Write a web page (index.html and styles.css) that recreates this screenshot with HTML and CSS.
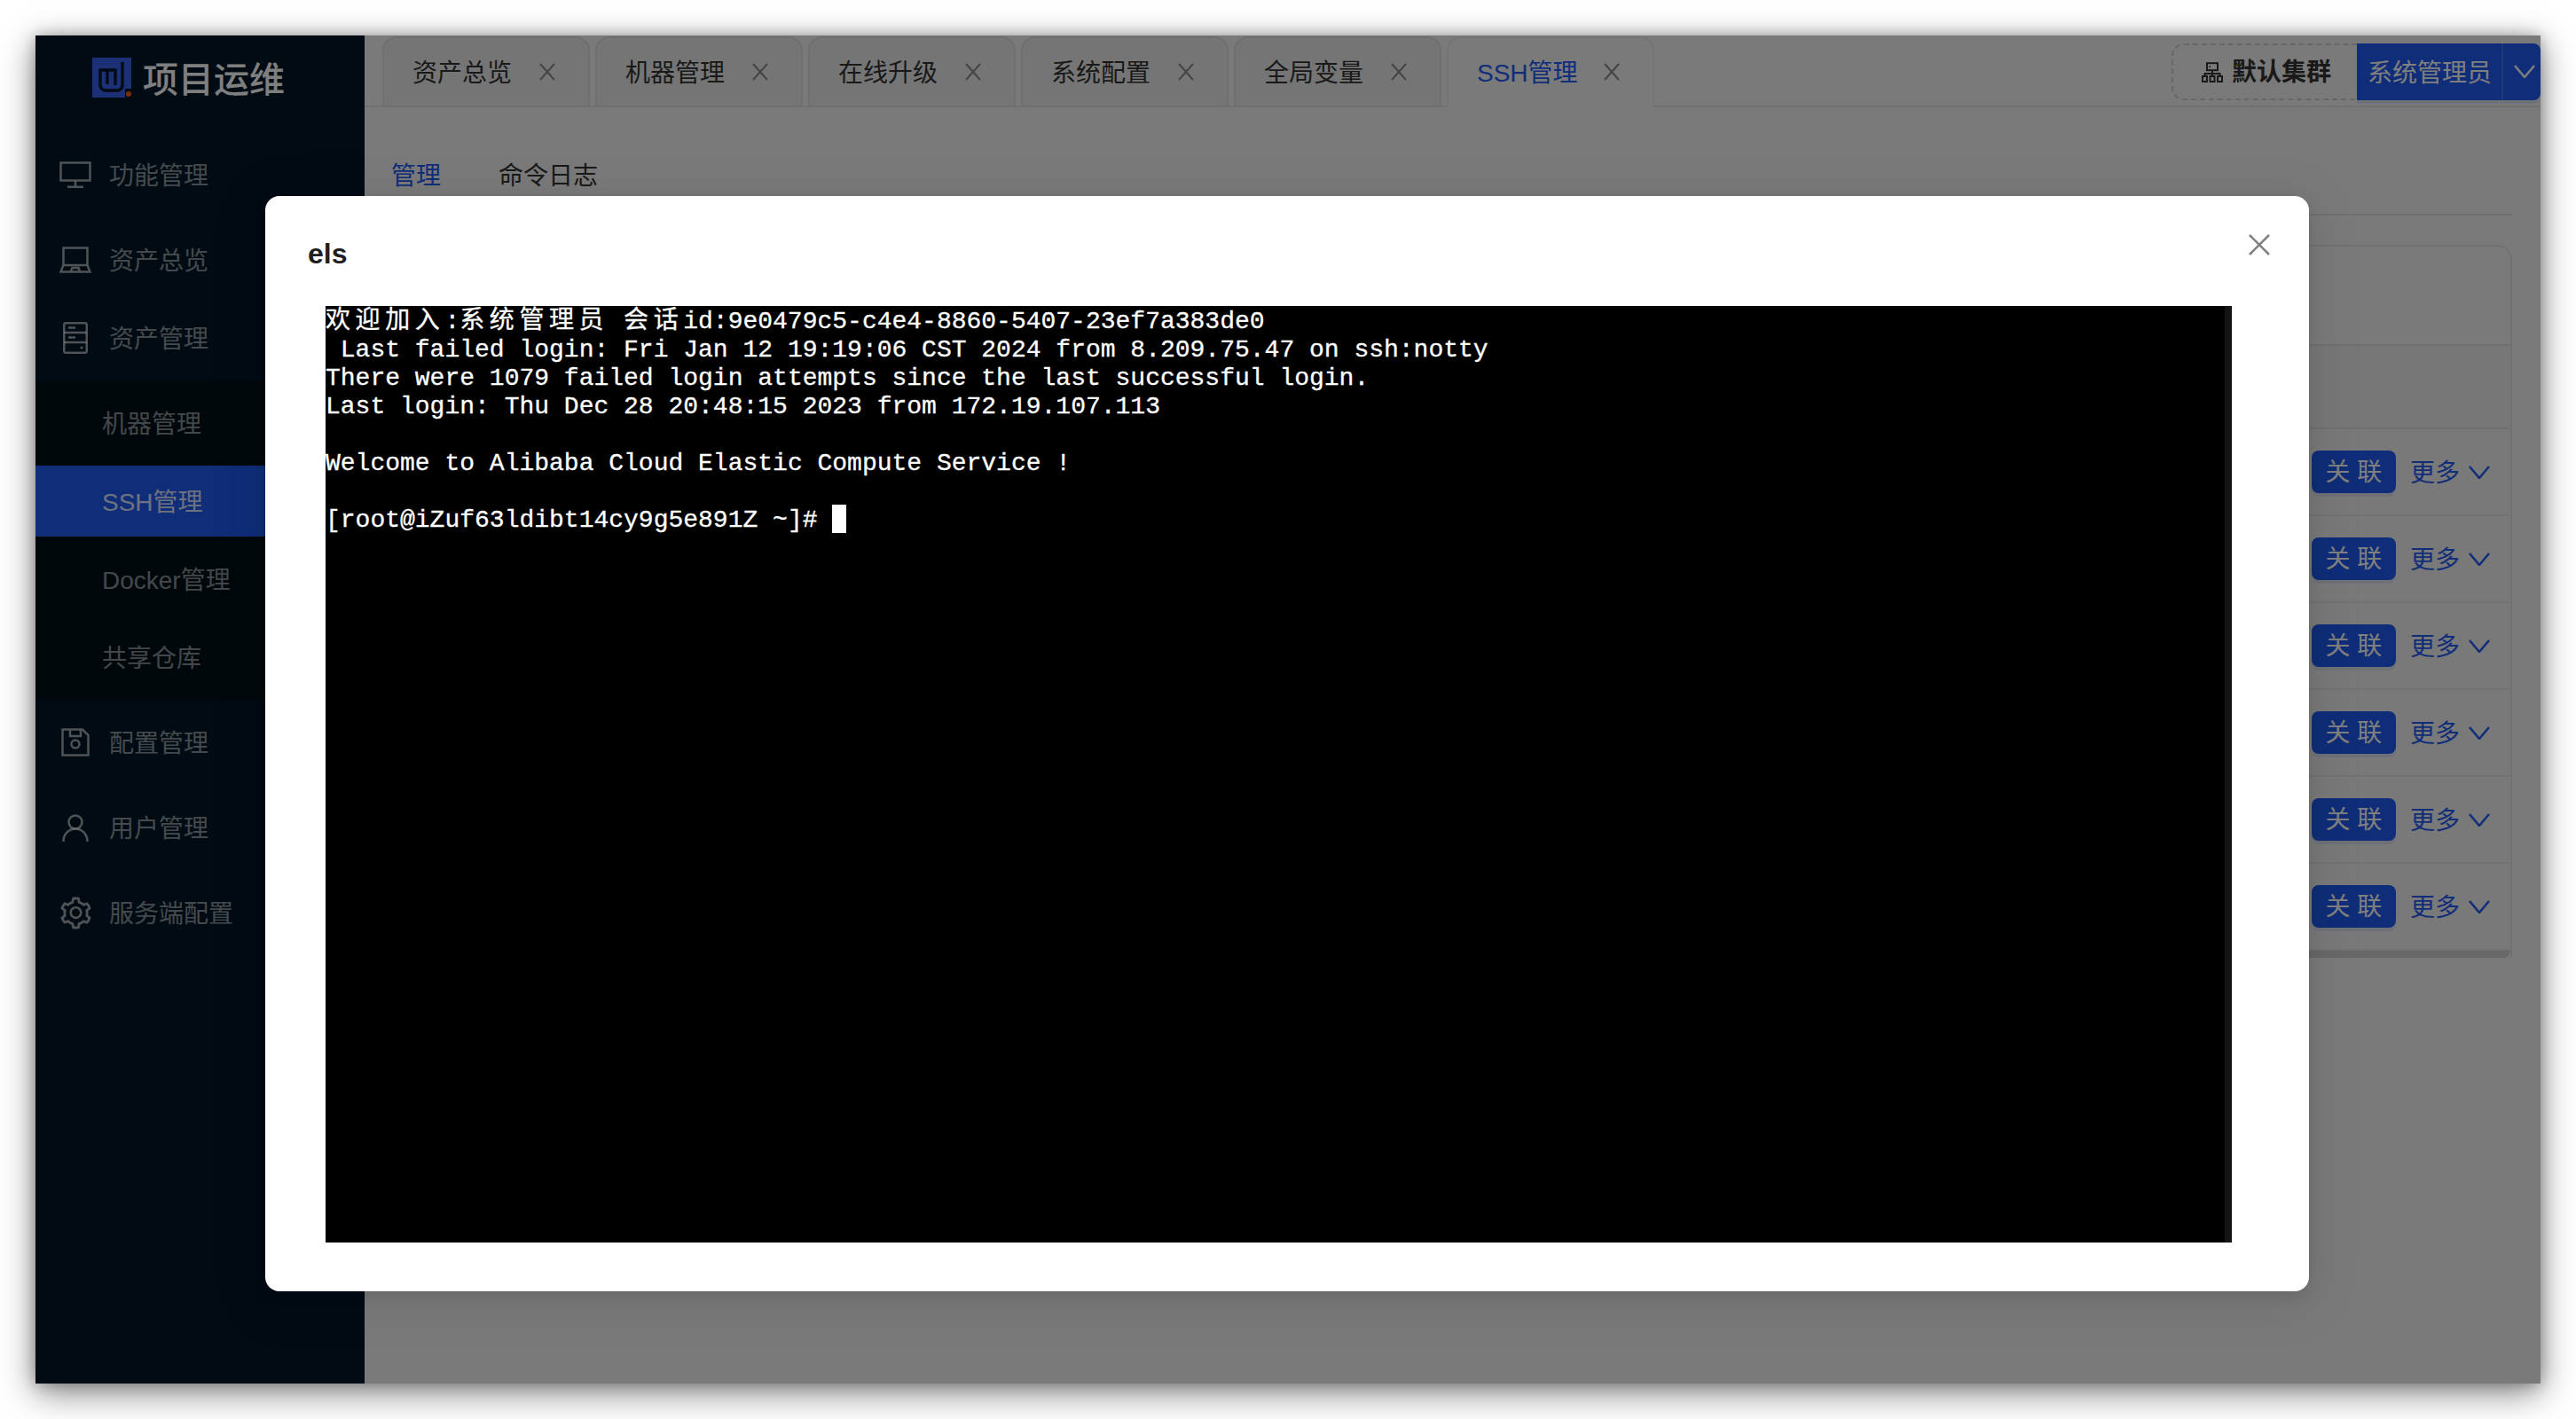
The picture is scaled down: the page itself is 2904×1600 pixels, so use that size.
FILE: index.html
```html
<!DOCTYPE html>
<html lang="zh-CN">
<head>
<meta charset="utf-8">
<title>项目运维</title>
<link rel="stylesheet" href="styles.css">
</head>
<body>
<div class="window">
  <aside class="sidebar">
    <div class="brand">
      <svg class="brand-logo" viewBox="0 0 44 45">
        <path class="logo-bg" d="M0 0H44V35H37V45H0Z"/>
        <path class="logo-ink" d="M34 5V31a6 6 0 0 1-6 6H15a6 6 0 0 1-6-6V14H26V31M17 14V30"/>
        <circle class="logo-dot" cx="41" cy="41" r="3"/>
      </svg>
      <span class="brand-name">项目运维</span>
    </div>
    <nav class="menu">
      <div class="menu-item gap-lg">
        <span class="menu-icon"><svg class="line-icon w36" viewBox="0 0 36 30"><rect x="1.5" y="1.5" width="33" height="20"/><path d="M18 22V28M9 28.7H27"/></svg></span>
        <span class="menu-text">功能管理</span>
      </div>
      <div class="menu-item gap-sm">
        <span class="menu-icon"><svg class="line-icon w36" viewBox="0 0 36 30"><path d="M4.5 21V1.5H31.5V21M4.5 21H31.5L34.5 28.5H1.5ZM13 28L14.5 24H21.5L23 28"/></svg></span>
        <span class="menu-text">资产总览</span>
      </div>
      <div class="menu-item gap-sm">
        <span class="menu-icon"><svg class="line-icon w28" viewBox="0 0 28 36"><rect x="1.25" y="1.25" width="25.5" height="33.5" rx="2"/><path d="M1 12H27M1 23H27M6 6.5H14M6 17.5H14"/><circle class="icon-dot" cx="21" cy="29" r="1.6"/></svg></span>
        <span class="menu-text">资产管理</span>
      </div>
      <div class="submenu">
        <div class="menu-item sub">机器管理</div>
        <div class="menu-item sub active">SSH管理</div>
        <div class="menu-item sub">Docker管理</div>
        <div class="menu-item sub">共享仓库</div>
      </div>
      <div class="menu-item gap-lg">
        <span class="menu-icon"><svg class="line-icon w32" viewBox="0 0 32 32"><path d="M1.5 1.5H24L30.5 8V30.5H1.5ZM10 1.5V9H22V1.5"/><circle cx="16" cy="18" r="4.5"/></svg></span>
        <span class="menu-text">配置管理</span>
      </div>
      <div class="menu-item gap-lg">
        <span class="menu-icon"><svg class="line-icon w30" viewBox="0 0 30 31"><circle cx="15" cy="9" r="7.5"/><path d="M1.5 31C1.5 22 8 16.5 15 16.5S28.500 22 28.500 31"/></svg></span>
        <span class="menu-text">用户管理</span>
      </div>
      <div class="menu-item">
        <span class="menu-icon"><svg class="gear-icon" viewBox="0 0 1024 1024"><path d="M924.8 625.7l-65.5-56c3.1-19 4.7-38.4 4.7-57.8s-1.6-38.8-4.7-57.8l65.5-56a32.03 32.03 0 0 0 9.3-35.2l-.9-2.6a443.74 443.74 0 0 0-79.7-137.9l-1.8-2.1a32.12 32.12 0 0 0-35.1-9.5l-81.3 28.9c-30-24.6-63.5-44-99.7-57.6l-15.7-85a32.05 32.05 0 0 0-25.8-25.7l-2.7-.5c-52.1-9.4-106.9-9.4-159 0l-2.7.5a32.05 32.05 0 0 0-25.8 25.7l-15.8 85.4a351.86 351.86 0 0 0-99 57.4l-81.9-29.1a32 32 0 0 0-35.1 9.5l-1.8 2.1a446.02 446.02 0 0 0-79.7 137.9l-.9 2.6c-4.5 12.5-.8 26.5 9.3 35.2l66.3 56.6c-3.1 18.8-4.6 38-4.6 57.1 0 19.2 1.5 38.4 4.6 57.1L99 625.5a32.03 32.03 0 0 0-9.3 35.2l.9 2.6c18.1 50.4 44.9 96.9 79.7 137.9l1.8 2.1a32.12 32.12 0 0 0 35.1 9.5l81.9-29.1c29.8 24.5 63.1 43.9 99 57.4l15.8 85.4a32.05 32.05 0 0 0 25.8 25.7l2.7.5a449.4 449.4 0 0 0 159 0l2.7-.5a32.05 32.05 0 0 0 25.8-25.7l15.7-85a350 350 0 0 0 99.7-57.6l81.3 28.9a32 32 0 0 0 35.1-9.5l1.8-2.1c34.8-41.1 61.6-87.5 79.7-137.9l.9-2.6c4.5-12.3.8-26.3-9.3-35zM788.3 465.9c2.5 15.1 3.8 30.6 3.8 46.1s-1.3 31-3.8 46.1l-6.6 40.1 74.7 63.9a370.03 370.03 0 0 1-42.6 73.6L721 702.8l-31.4 25.8c-23.9 19.6-50.5 35-79.3 45.8l-38.1 14.3-17.9 97a377.5 377.5 0 0 1-85 0l-17.9-97.2-37.8-14.5c-28.5-10.8-55-26.2-78.7-45.7l-31.4-25.9-93.4 33.2c-17-22.9-31.2-47.6-42.6-73.6l75.5-64.5-6.5-40c-2.4-14.9-3.7-30.3-3.7-45.5 0-15.3 1.2-30.6 3.7-45.5l6.5-40-75.5-64.5c11.3-26.1 25.6-50.7 42.6-73.6l93.4 33.2 31.4-25.9c23.7-19.5 50.2-34.9 78.7-45.7l37.9-14.3 17.9-97.2c28.1-3.2 56.8-3.2 85 0l17.9 97 38.1 14.3c28.7 10.8 55.4 26.2 79.3 45.8l31.4 25.8 92.8-32.9c17 22.9 31.2 47.6 42.6 73.6L781.8 426l6.5 39.9zM512 326c-97.2 0-176 78.8-176 176s78.8 176 176 176 176-78.8 176-176-78.8-176-176-176zm79.2 255.2A111.6 111.6 0 0 1 512 614c-29.9 0-58-11.7-79.2-32.8A111.6 111.6 0 0 1 400 502c0-29.9 11.7-58 32.8-79.2C454 401.6 482.1 390 512 390c29.9 0 58 11.6 79.2 32.8A111.6 111.6 0 0 1 624 502c0 29.9-11.700 58-32.800 79.200z"/></svg></span>
        <span class="menu-text">服务端配置</span>
      </div>
    </nav>
  </aside>

  <main class="main">
    <header class="topbar">
      <div class="tabs">
        <div class="tab"><span class="tab-label">资产总览</span><svg class="tab-close" viewBox="0 0 20 20"><path d="M2 1L18 19M18 1L2 19"/></svg></div>
        <div class="tab"><span class="tab-label">机器管理</span><svg class="tab-close" viewBox="0 0 20 20"><path d="M2 1L18 19M18 1L2 19"/></svg></div>
        <div class="tab"><span class="tab-label">在线升级</span><svg class="tab-close" viewBox="0 0 20 20"><path d="M2 1L18 19M18 1L2 19"/></svg></div>
        <div class="tab"><span class="tab-label">系统配置</span><svg class="tab-close" viewBox="0 0 20 20"><path d="M2 1L18 19M18 1L2 19"/></svg></div>
        <div class="tab"><span class="tab-label">全局变量</span><svg class="tab-close" viewBox="0 0 20 20"><path d="M2 1L18 19M18 1L2 19"/></svg></div>
        <div class="tab tab-active"><span class="tab-label">SSH管理</span><svg class="tab-close" viewBox="0 0 20 20"><path d="M2 1L18 19M18 1L2 19"/></svg></div>
      </div>
      <div class="top-actions">
        <div class="cluster">
          <svg class="cluster-icon" viewBox="0 0 24 23"><rect x="6" y="1.200" width="12" height="8"/><path d="M12 9V13M3.500 16V13H20.500V16M12 13V16M8.500 5.200H10"/><rect x="1" y="16" width="5" height="6"/><rect x="9.500" y="16" width="5" height="6"/><rect x="18" y="16" width="5" height="6"/></svg>
          <span class="cluster-name">默认集群</span>
        </div>
        <div class="user-btn">系统管理员</div>
        <div class="user-caret"><svg class="chevron" viewBox="0 0 24 15"><path d="M1 1L12 14L23 1"/></svg></div>
      </div>
    </header>

    <section class="page">
      <div class="subtabs">
        <span class="subtab subtab-active">管理</span>
        <span class="subtab">命令日志</span>
      </div>
      <div class="card">
        <div class="card-head"></div>
        <div class="table-head"></div>
        <div class="row"><span class="btn">关 联</span><span class="more">更多</span><svg class="chevron more-caret" viewBox="0 0 24 15"><path d="M1 1L12 14L23 1"/></svg></div>
        <div class="row"><span class="btn">关 联</span><span class="more">更多</span><svg class="chevron more-caret" viewBox="0 0 24 15"><path d="M1 1L12 14L23 1"/></svg></div>
        <div class="row"><span class="btn">关 联</span><span class="more">更多</span><svg class="chevron more-caret" viewBox="0 0 24 15"><path d="M1 1L12 14L23 1"/></svg></div>
        <div class="row"><span class="btn">关 联</span><span class="more">更多</span><svg class="chevron more-caret" viewBox="0 0 24 15"><path d="M1 1L12 14L23 1"/></svg></div>
        <div class="row"><span class="btn">关 联</span><span class="more">更多</span><svg class="chevron more-caret" viewBox="0 0 24 15"><path d="M1 1L12 14L23 1"/></svg></div>
        <div class="row"><span class="btn">关 联</span><span class="more">更多</span><svg class="chevron more-caret" viewBox="0 0 24 15"><path d="M1 1L12 14L23 1"/></svg></div>
        <div class="hscroll"></div>
      </div>
    </section>
  </main>

  <div class="mask"></div>

  <div class="modal">
    <div class="modal-head"><span class="modal-title">els</span></div>
    <svg class="modal-close" viewBox="0 0 24 24"><path d="M1 1L23 23M23 1L1 23"/></svg>
    <div class="terminal">
      <div class="term-row"><span class="wide">欢迎加入</span>:<span class="wide">系统管理员</span> <span class="wide">会话</span>id:9e0479c5-c4e4-8860-5407-23ef7a383de0</div>
      <div class="term-row"> Last failed login: Fri Jan 12 19:19:06 CST 2024 from 8.209.75.47 on ssh:notty</div>
      <div class="term-row">There were 1079 failed login attempts since the last successful login.</div>
      <div class="term-row">Last login: Thu Dec 28 20:48:15 2023 from 172.19.107.113</div>
      <div class="term-row"></div>
      <div class="term-row">Welcome to Alibaba Cloud Elastic Compute Service !</div>
      <div class="term-row"></div>
      <div class="term-row">[root@iZuf63ldibt14cy9g5e891Z ~]# <span class="cursor"></span></div>
      <div class="term-scroll"></div>
    </div>
  </div>
</div>
</body>
</html>
```

FILE: styles.css
```css
* { box-sizing: border-box; }
html, body { margin: 0; height: 100%; }
body {
  background: #fff;
  padding: 40px;
  font-family: "Liberation Sans", "Noto Sans CJK SC", sans-serif;
  font-size: 28px;
  line-height: 40px;
  color: #333;
  overflow: hidden;
}
.window {
  position: relative;
  display: flex;
  width: 2824px;
  height: 1520px;
  background: #f4f4f4;
  box-shadow: 0 10px 36px rgba(0, 0, 0, .5), 0 0 14px rgba(0, 0, 0, .25);
}

/* sidebar */
.sidebar {
  flex: none;
  width: 371px;
  background: #011726;
  color: rgba(255, 255, 255, .55);
}
.brand {
  display: flex;
  align-items: flex-start;
  height: 117px;
  padding: 25px 0 0 64px;
}
.brand-logo { width: 44px; height: 45px; flex: none; margin-right: 13px; }
.logo-bg { fill: #3860f0; }
.logo-ink { fill: none; stroke: #011726; stroke-width: 3.4; }
.logo-dot { fill: #ff5a20; }
.brand-name {
  font-size: 40px;
  line-height: 50px;
  font-weight: 500;
  color: #fff;
}
.menu-item {
  display: flex;
  align-items: center;
  height: 80px;
  padding-left: 25px;
}
.gap-lg { margin-bottom: 16px; }
.gap-sm { margin-bottom: 8px; }
.menu-icon {
  display: flex;
  align-items: center;
  justify-content: center;
  width: 40px;
  margin-right: 18px;
  color: rgba(255, 255, 255, .62);
}
.menu-text { margin-top: 3px; }
.line-icon { fill: none; stroke: currentColor; stroke-width: 2.5; }
.icon-dot { fill: currentColor; stroke: none; }
.w36 { width: 36px; height: 30px; }
.w28 { width: 28px; height: 36px; }
.w32 { width: 32px; height: 32px; }
.w30 { width: 30px; height: 31px; }
.gear-icon { width: 41px; height: 41px; fill: currentColor; flex: none; }
.submenu {
  display: flex;
  flex-direction: column;
  gap: 8px;
  padding: 8px 0;
  margin-bottom: 8px;
  background: #001019;
}
.sub { padding: 3px 0 0 75px; }
.active {
  background: #1f5af0;
  color: rgba(255, 255, 255, .85);
}

/* top bar */
.main { flex: 1; min-width: 0; }
.topbar {
  display: flex;
  align-items: flex-start;
  height: 81px;
  padding-left: 20px;
  border-bottom: 2px solid #e2e2e2;
}
.tabs { display: flex; gap: 6px; padding-top: 1px; }
.tab {
  display: flex;
  align-items: center;
  width: 234px;
  height: 80px;
  padding: 0 32px;
  background: #ebebeb;
  border: 2px solid #dedede;
  border-radius: 16px 16px 0 0;
  color: #333;
}
.tab-label { width: 142px; flex: none; margin-top: 3px; }
.tab-close {
  width: 20px;
  height: 20px;
  flex: none;
  fill: none;
  stroke: #888;
  stroke-width: 2;
}
.tab-active {
  background: #f4f4f4;
  border-color: #e8e8e8;
  border-bottom-color: #f4f4f4;
  color: #1f5af0;
}
.top-actions {
  display: flex;
  height: 64px;
  margin: 9px 0 0 auto;
  line-height: 64px;
}
.cluster {
  display: flex;
  align-items: center;
  gap: 10px;
  width: 209px;
  padding-left: 32px;
  border: 2px dashed #cfcfcf;
  border-right: 0;
  border-radius: 14px 0 0 14px;
  font-weight: 700;
}
.cluster-name { margin-top: 2px; }
.cluster-icon {
  width: 24px;
  height: 23px;
  flex: none;
  fill: none;
  stroke: #333;
  stroke-width: 2;
}
.user-btn, .user-caret {
  display: flex;
  align-items: center;
  background: #1f5af0;
  color: #fff;
  box-shadow: 0 4px 0 rgba(31, 90, 240, .1);
}
.user-btn { width: 163px; padding: 3px 0 0 12px; }
.user-caret {
  width: 44px;
  padding: 0 0 2px 12px;
  border-left: 2px solid rgba(255, 255, 255, .15);
  border-radius: 0 8px 8px 0;
}
.chevron {
  width: 24px;
  height: 15px;
  flex: none;
  fill: none;
  stroke: #fff;
  stroke-width: 2.5;
}

/* page */
.page { padding: 0 32px 0 20px; }
.subtabs {
  display: flex;
  gap: 65px;
  padding: 58px 0 22px 10px;
  border-bottom: 2px solid #e2e2e2;
  margin-bottom: 33px;
}
.subtab-active { color: #1f5af0; }
.card {
  border: 2px solid #e2e2e2;
  border-bottom: 0;
  border-radius: 16px 16px 0 0;
  background: #f5f5f5;
}
.card-head { height: 112px; border-bottom: 2px solid #e0e0e0; }
.table-head { height: 94px; background: #eeeeee; border-bottom: 2px solid #e0e0e0; }
.row {
  display: flex;
  align-items: center;
  justify-content: flex-end;
  height: 98px;
  padding-right: 23px;
  border-bottom: 2px solid #e4e4e4;
  background: #f2f2f2;
}
.btn {
  width: 95px;
  height: 48px;
  line-height: 50px;
  text-align: center;
  border-radius: 8px;
  background: #1f5af0;
  color: #fff;
  box-shadow: 0 4px 0 rgba(31, 90, 240, .1);
}
.more { margin: 3px 0 0 16px; color: #1f5af0; }
.more-caret { margin-left: 10px; stroke: #1f5af0; }
.hscroll { height: 8px; background: #d0d0d0; border-radius: 0 0 8px 8px; }

/* overlay */
.mask {
  position: absolute;
  inset: 0;
  background: rgba(0, 0, 0, .5);
}
.modal {
  position: absolute;
  left: 259px;
  top: 181px;
  width: 2304px;
  height: 1235px;
  display: flex;
  flex-direction: column;
  padding: 0 87px 55px 68px;
  background: #fff;
  border-radius: 16px;
  box-shadow: 0 6px 16px rgba(0, 0, 0, .1), 0 9px 56px 16px rgba(0, 0, 0, .06);
}
.modal-head {
  height: 124px;
  flex: none;
  padding-top: 41px;
  margin-left: -20px;
}
.modal-title {
  font-size: 32px;
  line-height: 48px;
  font-weight: 700;
  color: #1f1f1f;
}
.modal-close {
  position: absolute;
  top: 43px;
  right: 44px;
  width: 24px;
  height: 24px;
  fill: none;
  stroke: #808080;
  stroke-width: 2.5;
}
.terminal {
  position: relative;
  flex: 1;
  background: #000;
  color: #fff;
  font-family: "Liberation Mono", "Noto Sans CJK SC", monospace;
  font-size: 28px;
  -webkit-text-stroke: .3px #fff;
}
.term-row {
  height: 32px;
  line-height: 35px;
  white-space: pre;
}
.wide {
  font-family: "Noto Sans CJK SC", sans-serif;
  letter-spacing: 5.6px;
  line-height: 0;
}
.cursor {
  display: inline-block;
  width: 16px;
  height: 32px;
  background: #fff;
  vertical-align: top;
}
.term-scroll {
  position: absolute;
  top: 0;
  right: 0;
  bottom: 0;
  width: 8px;
  background: #141414;
}
```
